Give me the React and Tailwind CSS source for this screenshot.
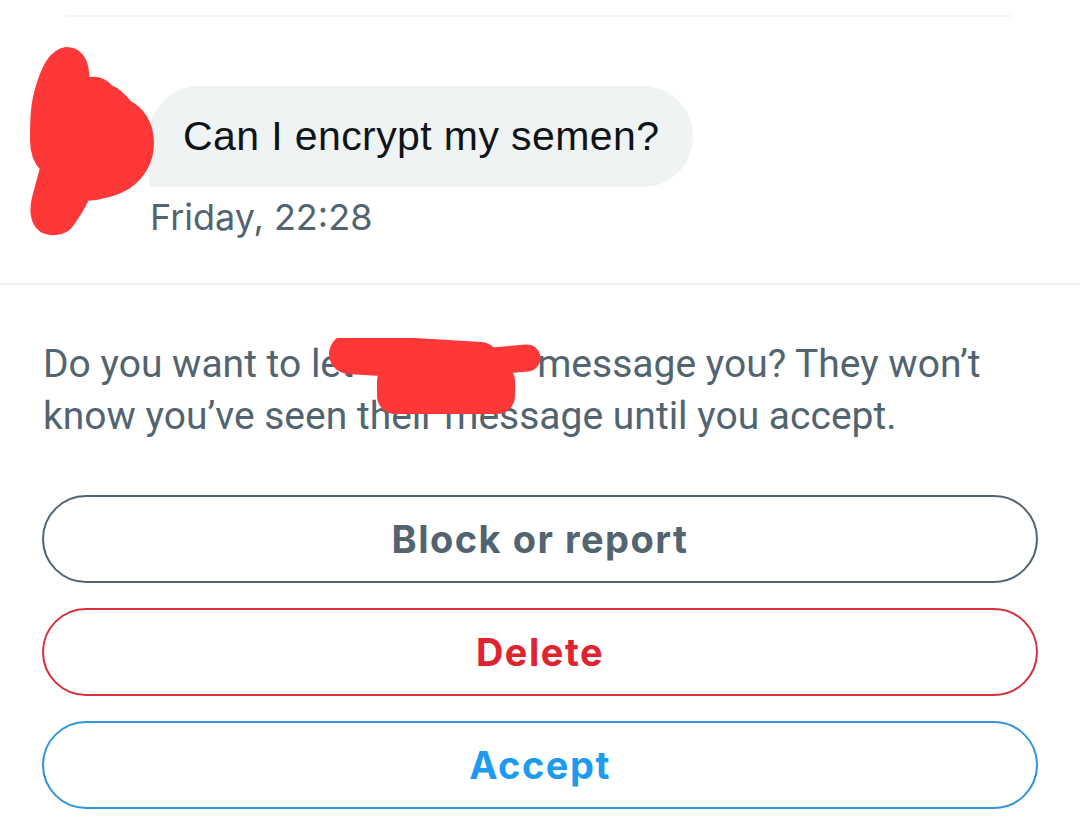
export default function App() {
  return (
    <div className="w-[1080px] h-[840px] bg-white overflow-hidden font-['Roboto',sans-serif]">
      <div className="pt-[15px]">
        <div className="ml-[67px] w-[945px] h-[2px] bg-[#f3f5f6]" />
      </div>

      <div className="relative mt-[69px] flex items-start">
        <div className="ml-[149px] flex flex-col items-start">
          <div className="h-[101px] flex items-center px-[34px] rounded-tl-[50px] rounded-tr-[50px] rounded-br-[50px] bg-[#eff3f4] font-['Liberation_Sans',sans-serif] text-[41px] tracking-[0.4px] text-[#0f1419] whitespace-nowrap">
            Can I encrypt my semen?
          </div>
          <div className="mt-[8px] pl-[1px] font-['Inter',sans-serif] text-[36px] leading-[44px] text-[#536471] whitespace-nowrap">
            Friday, 22:28
          </div>
        </div>
        <svg
          className="absolute left-[20px] top-[-46px]"
          width="150"
          height="200"
          viewBox="20 40 150 200"
        >
          <path
            fill="#fe3838"
            stroke="#fe3838"
            strokeWidth="8"
            strokeLinejoin="round"
            d="M66 51 C78 51 84 60 85 72 L86 82 C96 79 104 82 110 89 C118 92 124 99 128 104 C140 110 150 124 150 143 C150 160 142 176 126 186 C112 194 98 196 86 197 C82 205 76 216 68 226 C62 232 50 233 42 228 C34 222 33 210 36 198 C39 186 42 176 44 168 C38 162 34 152 34 140 C34 122 34 104 40 86 C45 70 52 53 66 51 Z"
          />
        </svg>
      </div>

      <div className="mt-[44px] h-[2px] bg-[#eceff1]" />

      <div className="relative pt-[53px] px-[43px]">
        <p className="text-[39px] leading-[52px] text-[#536471] whitespace-nowrap">
          Do you want to let <span className="inline-block w-[164px]" /> message you? They won’t
          <br />
          know you’ve seen their message until you accept.
        </p>
        <svg
          className="absolute left-0 top-[53px]"
          width="1080"
          height="110"
          viewBox="0 0 1080 110"
        >
          <g fill="#fe3838" stroke="#fe3838" strokeLinecap="round" strokeLinejoin="round">
            <path d="M349 16 L480 24" strokeWidth="40" fill="none" />
            <path d="M480 24 L527 20" strokeWidth="27" fill="none" />
            <rect x="377" y="25" width="138" height="51" rx="18" stroke="none" />
          </g>
        </svg>
      </div>

      <div className="mt-[53px] px-[42px] flex flex-col gap-[25px] font-['Inter',sans-serif]">
        <div className="h-[88px] rounded-full border-[2.5px] border-[#536471] flex items-center justify-center text-[38px] font-bold tracking-[1.5px] text-[#536471]">
          Block or report
        </div>
        <div className="h-[88px] rounded-full border-[2.5px] border-[#d8303c] flex items-center justify-center text-[38px] font-bold tracking-[1.5px] text-[#e0242f]">
          Delete
        </div>
        <div className="h-[88px] rounded-full border-[2.5px] border-[#3194dc] flex items-center justify-center text-[38px] font-bold tracking-[1.5px] text-[#1d9bf0]">
          Accept
        </div>
      </div>
    </div>
  );
}
